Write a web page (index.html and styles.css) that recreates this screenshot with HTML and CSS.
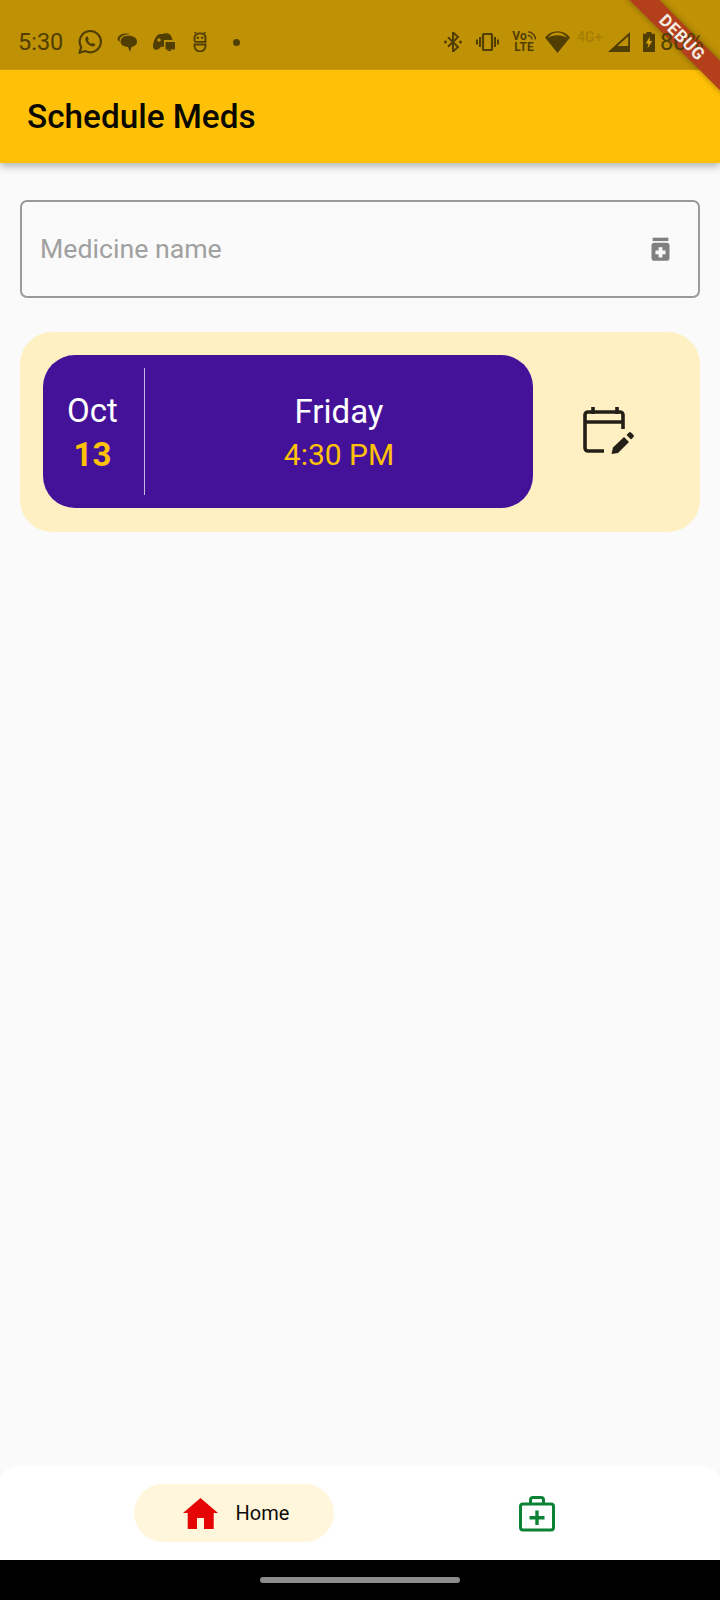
FILE: index.html
```html
<!DOCTYPE html>
<html lang="en">
<head>
<meta charset="utf-8">
<title>Schedule Meds</title>
<link rel="stylesheet" href="styles.css">
</head>
<body>
<div class="screen">
  <header class="appbar">
    <h1 class="appbar-title">Schedule Meds</h1>
  </header>
  <div class="debug-clip"><div class="debug-band"></div></div>
  <div class="statusbar">
    <div class="status-left">
      <span class="clock">5:30</span>
      <svg class="st wa" viewBox="0 0 24 24"><path d="M1.500 22.800l1.700-5.700A10.600 10.600 0 1 1 7.300 21z" fill="none" stroke="currentColor" stroke-width="2.200" stroke-linejoin="round"/><path d="M8.300 6.800c.5-.5 1.200-.6 1.500 0l.9 2.200c.1.400-.2.800-.7 1.400.7 1.500 1.800 2.600 3.400 3.400.6-.6 1-1 1.400-.8l2.100 1c.5.300.5 1 0 1.600-.9 1.100-2.300 1.300-4 .5-2.300-1-4.200-2.900-5.200-5.200-.6-1.500-.5-2.900.6-4.100z" fill="currentColor"/></svg>
      <svg class="st msg" viewBox="0 0 20 19"><path d="M1 4.200C2.500 1 9-.5 13.500 1.200 9 1.200 4 2.500 2.800 5.800c-.4 1.100-.3 2.200.1 3.200C.6 7.800 0 6 1 4.200z" fill="currentColor"/><path d="M11 2.800c5 0 9 1.800 9 5.700 0 3.200-2.600 5-5.500 5.400L13 19l-2-5C7 13.700 3.600 12 3.600 8.500c0-3.700 3.700-5.700 7.400-5.700z" fill="currentColor"/></svg>
      <svg class="st game" viewBox="0 0 22 18"><path d="M5.500 1.500c1.500-1 3.200-.2 4-.5 2-.7 4-.8 5.500-.5 2.500.5 3.800 3.200 4.500 6.500H11v6.800H8L5.800 16c-1.600 1.500-5.300 1-5.800-2C-.2 10 2 3.500 5.500 1.500z" fill="currentColor"/><circle cx="6" cy="7" r="1.800" fill="#bf9105"/><rect x="12.500" y="9" width="9.500" height="7.500" rx=".8" fill="currentColor"/><path d="M14.500 16.500h3.500V18h-3.500z" fill="currentColor"/></svg>
      <svg class="st droid" viewBox="0 0 14 20"><path d="M1.500 9.300V5.500C1.500 3 3.800 1.400 7 1.400s5.500 1.600 5.500 4.100v4.400H1.500" fill="none" stroke="currentColor" stroke-width="1.900"/><path d="M1.500 12.500h11V14a5.500 5.500 0 0 1-11 0z" fill="none" stroke="currentColor" stroke-width="1.900"/><path d="M3 1L1.500 0M11 1l1.500-1" stroke="currentColor" stroke-width="1.600"/><circle cx="4.800" cy="5.800" r="1.200" fill="currentColor"/><circle cx="9.200" cy="5.800" r="1.200" fill="currentColor"/></svg>
      <span class="dot"></span>
    </div>
    <div class="status-right">
      <svg class="st bt" viewBox="0 0 18 20"><path d="M4 5.200l10 9.800-5 4.500V.5l5 4.500-10 9.800" fill="none" stroke="currentColor" stroke-width="2"/><circle cx="1.500" cy="10" r="1.500" fill="currentColor"/><circle cx="16.500" cy="10" r="1.500" fill="currentColor"/></svg>
      <svg class="st vib" viewBox="0 0 23 18"><rect x="7" y="1" width="9" height="16" rx="1.200" fill="none" stroke="currentColor" stroke-width="2.200"/><path d="M4 4v10M1 6.500v5M19 4v10M22 6.500v5" stroke="currentColor" stroke-width="2" fill="none"/></svg>
      <span class="volte"><span class="vo">Vo<svg class="vo-wave" viewBox="0 0 10 10"><path d="M1 5a4.500 4.500 0 0 1 4.500 4.500M1 1a8.500 8.500 0 0 1 8.500 8.500" fill="none" stroke="currentColor" stroke-width="1.600"/></svg></span><span>LTE</span></span>
      <svg class="st wifi" viewBox="0 0 25 22"><path d="M0 6.500C6.500-2 18.500-2 25 6.500L12.500 22z" fill="currentColor"/><path d="M2.700 6.900C8-.2 17-.2 22.300 6.900 17 3.200 8 3.200 2.700 6.900z" fill="#bf9105"/></svg>
      <span class="fourg">4G+</span>
      <svg class="st signal" viewBox="0 0 22 20"><path d="M0 20L22 0v20zM20.200 4.200L9.500 14h10.700z" fill="currentColor" fill-rule="evenodd"/></svg>
      <svg class="st batt" viewBox="0 0 12 20"><path d="M3.500 0h5v1.800H12V20H0V1.800h3.500z" fill="currentColor"/><path d="M7 4.500L2.800 11.500h2.700L4.500 16.500l4.700-7.500H6.500z" fill="#d9a70c"/></svg>
      <span class="pct">80%</span>
    </div>
  </div>
  <div class="debug-clip"><div class="debug-label">DEBUG</div></div>

  <main class="content">
    <div class="field">
      <span class="placeholder">Medicine name</span>
      <svg class="field-icon" viewBox="0 0 24 24"><path d="M5 1.500h14v3H5z" fill="currentColor"/><path d="M6.500 6h11a2.500 2.500 0 0 1 2.500 2.500v11a2.500 2.500 0 0 1-2.500 2.500h-11A2.500 2.500 0 0 1 4 19.500v-11A2.500 2.500 0 0 1 6.500 6z" fill="currentColor"/><path d="M10.300 10h3.400v2.800h2.800v3.400h-2.800V19h-3.400v-2.800H7.500v-3.400h2.800z" fill="#fafafa"/></svg>
    </div>

    <section class="sched-card">
      <div class="ticket">
        <div class="date">
          <span class="month">Oct</span>
          <span class="day">13</span>
        </div>
        <div class="divider"></div>
        <div class="when">
          <span class="weekday">Friday</span>
          <span class="time">4:30 PM</span>
        </div>
      </div>
      <div class="edit-wrap">
        <svg class="edit-icon" viewBox="0 0 56 56"><path d="M13 3v7M37 3v7" stroke="#231f16" stroke-width="3.600" fill="none"/><path d="M24 47H8a3 3 0 0 1-3-3V11a3 3 0 0 1 3-3h32a3 3 0 0 1 3 3v14M5 18h38" stroke="#231f16" stroke-width="3.600" fill="none"/><path d="M31.500 50l1.500-6.500L44 33l5 5-11 11z" fill="#231f16"/><path d="M46.500 31l2.500-2.500a1.500 1.500 0 0 1 2 0l2.500 2.500a1.500 1.500 0 0 1 0 2L51 35.500z" fill="#231f16"/></svg>
      </div>
    </section>
  </main>

  <nav class="bottom-nav">
    <div class="pill">
      <svg class="home-icon" viewBox="0 0 35 31"><path d="M17.500 0L35 15h-4.300v16H21V20h-7v11H4.700V15H0z" fill="#e50505"/></svg>
      <span class="pill-label">Home</span>
    </div>
    <svg class="kit-icon" viewBox="0 0 36 36"><path d="M11.500 8V4a2.500 2.500 0 0 1 2.500-2.500h8A2.500 2.500 0 0 1 24.500 4v4" fill="none" stroke="#0b8235" stroke-width="3"/><rect x="1.500" y="8" width="33" height="26" rx="2.500" fill="none" stroke="#0b8235" stroke-width="3"/><path d="M18 14.500v14.500M10.500 21.700h15" stroke="#0b8235" stroke-width="3.400" fill="none"/></svg>
  </nav>
  <div class="gesture-bar"><span class="handle"></span></div>
</div>
</body>
</html>
```
FILE: styles.css
```css
* { box-sizing: border-box; }
html, body { margin: 0; padding: 0; }
body { background: #fafafa; font-family: Roboto, "Noto Sans", sans-serif; }
.screen { position: relative; width: 720px; height: 1600px; display: flex; flex-direction: column; overflow: hidden; background: #fafafa; }

.appbar { height: 163px; padding: 70px 0 0 27px; display: flex; align-items: center; background: linear-gradient(#bf9105 0, #bf9105 69px, #c99a08 69px, #c99a08 70px, #ffc107 70px); box-shadow: 0 3px 8px rgba(0,0,0,.3); flex: none; position: relative; }
.appbar-title { margin: 0; font-size: 33.300px; font-weight: 500; color: #0b0800; }

.statusbar { position: absolute; top: 0; left: 0; width: 720px; height: 70px; padding: 14px 0 0 18px; color: #513e02; display: flex; align-items: center; justify-content: space-between; }
.status-left, .status-right { display: flex; align-items: center; }
.st { display: block; flex: none; }
.clock { font-size: 23.500px; width: 60px; }
.wa { width: 24px; height: 24px; }
.msg { width: 20px; height: 19px; margin-left: 15px; }
.game { width: 22px; height: 18px; margin-left: 16px; }
.droid { width: 14px; height: 20px; margin-left: 18px; }
.dot { width: 7px; height: 7px; border-radius: 50%; background: currentColor; margin-left: 26px; }
.bt { width: 18px; height: 20px; }
.vib { width: 23px; height: 18px; margin-left: 14px; }
.volte { display: flex; flex-direction: column; align-items: center; font-size: 12px; font-weight: 700; line-height: 11px; margin-left: 14px; width: 22px; }
.vo { display: flex; align-items: flex-start; }
.vo-wave { width: 9px; height: 9px; }
.wifi { width: 25px; height: 22px; margin-left: 10px; }
.fourg { font-size: 14px; font-weight: 500; margin-left: 7px; width: 28px; opacity: .22; position: relative; top: -5px; }
.signal { width: 22px; height: 20px; margin-left: 3px; }
.batt { width: 12px; height: 20px; margin-left: 13px; }
.pct { font-size: 23.500px; margin-left: 5px; width: 60px; }

.debug-clip { position: absolute; top: 0; right: 0; width: 130px; height: 130px; overflow: hidden; }
.debug-band, .debug-label { position: absolute; top: 27px; right: -32px; width: 140px; height: 21px; transform: rotate(45deg); }
.debug-band { background: #b3401b; box-shadow: 0 0 6px rgba(0,0,0,.35); }
.debug-label { color: #f5ece6; font-size: 17px; font-weight: 700; letter-spacing: .5px; line-height: 21px; text-align: center; }

.content { flex: 1; padding: 37px 20px 0; display: flex; flex-direction: column; gap: 34px; }
.field { height: 98px; border: 2px solid #9a9a9a; border-radius: 7px; display: flex; align-items: center; justify-content: space-between; padding: 0 24px 0 18px; }
.placeholder { font-size: 26.700px; color: #a0a0a0; }
.field-icon { width: 27px; height: 27px; color: #808080; }

.sched-card { height: 200px; border-radius: 32px; background: #fff0c4; padding: 23px 0 24px 23px; display: flex; align-items: stretch; }
.ticket { width: 490px; border-radius: 32px; background: #441299; display: flex; align-items: center; }
.date { width: 101px; display: flex; flex-direction: column; align-items: center; padding: 6px 2px 0 0; }
.month { font-size: 33px; line-height: 40px; color: #fff; }
.day { font-size: 33px; line-height: 48px; font-weight: 700; color: #ffc107; }
.divider { width: 1px; height: 127px; background: #c9b8df; flex: none; }
.when { flex: 1; display: flex; flex-direction: column; align-items: center; padding-top: 6px; }
.weekday { font-size: 33px; line-height: 40px; color: #fff; }
.time { font-size: 30px; line-height: 46px; color: #ffc107; }
.edit-wrap { flex: 1; display: flex; align-items: center; justify-content: center; padding-right: 18px; }
.edit-icon { width: 56px; height: 56px; }

.bottom-nav { height: 94px; background: #fff; border-radius: 18px 18px 0 0; display: flex; align-items: center; justify-content: space-between; padding: 0 165px 0 134px; flex: none; }
.pill { width: 200px; height: 58px; border-radius: 29px; background: #fff6dc; display: flex; align-items: center; justify-content: center; gap: 18px; padding-left: 4px; }
.home-icon { width: 35px; height: 31px; }
.pill-label { font-size: 20px; color: #0c0b06; }
.kit-icon { width: 36px; height: 36px; margin-top: 2px; }

.gesture-bar { height: 40px; background: #000; display: flex; justify-content: center; padding-top: 17px; flex: none; }
.handle { width: 200px; height: 6px; border-radius: 3px; background: #8c8c8c; }
```
